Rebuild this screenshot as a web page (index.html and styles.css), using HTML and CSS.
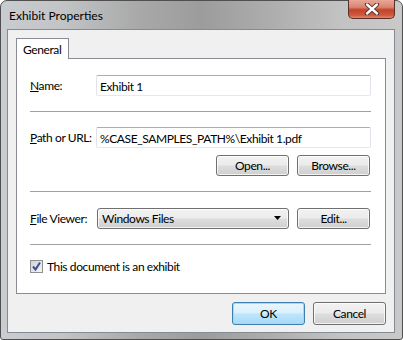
FILE: index.html
```html
<!DOCTYPE html>
<html lang="en">
<head>
    <meta charset="UTF-8">
    <title>Exhibit Properties</title>
    <link rel="stylesheet" href="styles.css">
</head>
<body>
    <div class="window">
        <div class="titlebar">
            <span class="title">Exhibit Properties</span>
            <div class="close-btn">
                <svg width="18" height="12" viewBox="0 0 18 12">
                    <path d="M4 1.5 L14 10.5 M14 1.5 L4 10.5" stroke="#4a2a24" stroke-width="4.2" stroke-linecap="round"/>
                    <path d="M4 1.5 L14 10.5 M14 1.5 L4 10.5" stroke="#ffffff" stroke-width="2.4" stroke-linecap="round"/>
                </svg>
            </div>
        </div>

        <div class="client">
            <div class="tabs">
                <div class="tab active">General</div>
            </div>

            <div class="panel">
                <div class="row">
                    <label class="label"><u>N</u>ame:</label>
                    <div class="textbox">Exhibit 1</div>
                </div>
                <div class="sep"></div>

                <div class="row">
                    <label class="label"><u>P</u>ath or URL:</label>
                    <div class="textbox">%CASE_SAMPLES_PATH%\Exhibit 1.pdf</div>
                </div>
                <div class="btn-row">
                    <button class="btn">Open...</button>
                    <button class="btn">Browse...</button>
                </div>
                <div class="sep"></div>

                <div class="row row-viewer">
                    <label class="label"><u>F</u>ile Viewer:</label>
                    <div class="select">
                        <span>Windows Files</span>
                        <svg width="7" height="4" viewBox="0 0 7 4"><path d="M0 0 H7 L3.5 4 Z" fill="#000"/></svg>
                    </div>
                    <button class="btn">Edit...</button>
                </div>
                <div class="sep"></div>

                <div class="check-row">
                    <span class="checkbox">
                        <svg width="11" height="11" viewBox="0 0 11 11">
                            <path d="M2 5.5 L4.5 8.5 L9 1.5" fill="none" stroke="#3b5290" stroke-width="2"/>
                        </svg>
                    </span>
                    <span>This document is an exhibit</span>
                </div>
            </div>

            <div class="actions">
                <button class="btn btn-default">OK</button>
                <button class="btn">Cancel</button>
            </div>
        </div>
    </div>
</body>
</html>
```

FILE: styles.css
```css
body {
    margin: 0;
    background: #ffffff;
    font-family: Lato, "Liberation Sans", sans-serif;
    font-size: 12px;
    letter-spacing: -0.4px;
    color: #000000;
}
.window {
    width: 403px;
    height: 340px;
    box-sizing: border-box;
    border: 1px solid #4f4f4f;
    border-radius: 7px 7px 3px 3px;
    background: linear-gradient(90deg, #c9ccd0 0%, #c2c4c6 15%, #a8a8a8 35%, #9c9c9c 50%, #aeaeae 68%, #c3c3c3 85%, #c9c9c9 100%);
    padding: 0 7px 6px 6px;
}
.titlebar {
    height: 28px;
    display: flex;
    align-items: center;
    position: relative;
}
.title {
    margin-left: 2px;
    margin-top: 1px;
    letter-spacing: 0;
    color: #000000;
}
.close-btn {
    position: absolute;
    top: -1px;
    right: 0;
    width: 47px;
    height: 19px;
    box-sizing: border-box;
    border: 1px solid #5b2f27;
    border-top: none;
    border-radius: 0 0 5px 5px;
    background: linear-gradient(#e7a898 0%, #d98570 40%, #c2432a 55%, #cf5a3e 85%, #e4886c 100%);
    display: flex;
    align-items: center;
    justify-content: center;
}
.client {
    height: 304px;
    box-sizing: border-box;
    border: 1px solid #858b93;
    background: #f0f0f0;
    padding: 8px 8px 0 8px;
}
.tabs {
    display: flex;
    height: 20px;
}
.tab {
    width: 53px;
    height: 21px;
    box-sizing: border-box;
    border: 1px solid #898c95;
    border-bottom: none;
    background: #ffffff;
    padding: 3px 0 0 6px;
    position: relative;
    z-index: 1;
}
.panel {
    height: 236px;
    box-sizing: border-box;
    border: 1px solid #898c95;
    background: #ffffff;
    padding: 16px 14px 0 13px;
}
.row {
    display: flex;
    align-items: center;
    height: 21px;
}
.label {
    width: 66px;
    flex: none;
    white-space: nowrap;
}
.textbox {
    flex: 1;
    height: 21px;
    box-sizing: border-box;
    border: 1px solid #e2e3ea;
    border-top-color: #abadb3;
    border-bottom-color: #e3e9ef;
    border-radius: 2px;
    padding: 3px 0 0 3px;
    white-space: nowrap;
}
.sep {
    height: 1px;
    background: #a0a0a0;
    margin: 15px 0;
}
.btn-row {
    display: flex;
    justify-content: flex-end;
    gap: 8px;
    margin-top: 7px;
    margin-right: 1px;
}
.btn {
    width: 73px;
    height: 21px;
    box-sizing: border-box;
    border: 1px solid #707070;
    border-radius: 3px;
    background: linear-gradient(#f2f2f2 0%, #ebebeb 48%, #dddddd 52%, #cfcfcf 100%);
    box-shadow: inset 0 0 0 1px rgba(255, 255, 255, 0.75);
    font-family: inherit;
    font-size: 12px;
    letter-spacing: -0.4px;
    color: #000000;
    padding: 0;
}
.row-viewer {
    height: 22px;
}
.row-viewer .btn {
    margin-left: 8px;
    margin-right: 1px;
}
.select {
    width: 193px;
    height: 21px;
    margin-left: 1px;
    box-sizing: border-box;
    border: 1px solid #707070;
    border-radius: 3px;
    background: linear-gradient(#f2f2f2 0%, #ebebeb 48%, #dddddd 52%, #cfcfcf 100%);
    box-shadow: inset 0 0 0 1px rgba(255, 255, 255, 0.75);
    display: flex;
    align-items: center;
    justify-content: space-between;
    padding: 0 7px 0 4px;
}
.check-row {
    display: flex;
    align-items: center;
    gap: 4px;
    margin-top: -1px;
}
.checkbox {
    width: 13px;
    height: 13px;
    box-sizing: border-box;
    border: 1px solid #8e8f8f;
    background: linear-gradient(135deg, #cfd3db, #f4f5f7);
    display: flex;
    align-items: center;
    justify-content: center;
}
.actions {
    display: flex;
    justify-content: flex-end;
    gap: 8px;
    margin-top: 8px;
}
.actions .btn {
    height: 23px;
}
.btn-default {
    border-color: #3c7fb1;
    background: linear-gradient(#eaf6fd 0%, #d9f0fc 48%, #bee6fd 52%, #a7d9f5 100%);
    box-shadow: inset 0 0 0 1px #8fe2fb;
}
```
